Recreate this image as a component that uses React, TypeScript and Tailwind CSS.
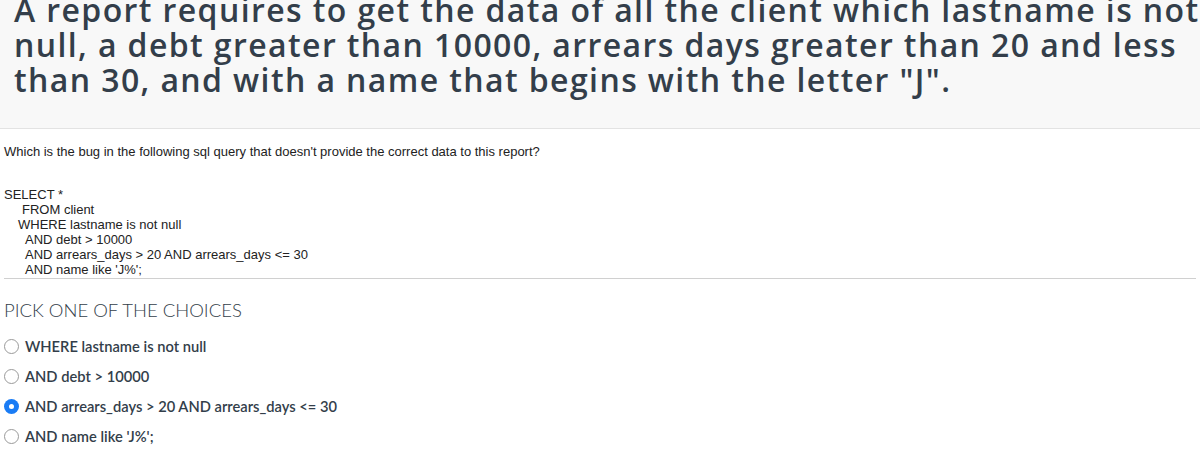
import React from "react";

const choices = [
  { label: "WHERE lastname is not null", checked: false },
  { label: "AND debt > 10000", checked: false },
  { label: "AND arrears_days > 20 AND arrears_days <= 30", checked: true },
  { label: "AND name like 'J%';", checked: false },
];

const Radio: React.FC<{ checked: boolean }> = ({ checked }) =>
  checked ? (
    <span className="flex h-[15px] w-[15px] items-center justify-center rounded-full bg-[#1a7cf5]">
      <span className="h-[5px] w-[5px] rounded-full bg-white" />
    </span>
  ) : (
    <span className="h-[15px] w-[15px] rounded-full border border-[#9a9a9a] bg-white" />
  );

const App: React.FC = () => {
  return (
    <div className="h-[455px] w-full overflow-hidden bg-white">
      {/* heading, scrolled a bit */}
      <div className="overflow-hidden border-b border-[#e3e3e3] bg-[#f8f8f8] px-[14px] pb-[31px] -mt-[8px]">
        <h1 className="whitespace-nowrap font-['Open_Sans',sans-serif] text-[32px] leading-[35px] font-semibold tracking-[1.4px] text-[#333e4a]">
          A report requires to get the data of all the client which lastname is not
          <br />
          null, a debt greater than 10000, arrears days greater than 20 and less
          <br />
          than 30, and with a name that begins with the letter "J".
        </h1>
      </div>

      <div className="px-[4px] font-['Liberation_Sans',Arial,sans-serif] text-[13px] text-[#222]">
        <p className="mt-[15px] leading-[15px]">
          Which is the bug in the following sql query that doesn't provide the correct data to this report?
        </p>
        <div className="mt-[28px] leading-[15px]">
          <div>SELECT *</div>
          <div className="pl-[18px]">FROM client</div>
          <div className="pl-[14px]">WHERE lastname is not null</div>
          <div className="pl-[21px]">AND debt &gt; 10000</div>
          <div className="pl-[21px]">AND arrears_days &gt; 20 AND arrears_days &lt;= 30</div>
          <div className="pl-[21px]">AND name like 'J%';</div>
        </div>
        <hr className="mt-[1px] border-t border-[#d0d0d0]" />
      </div>

      <div className="px-[4px] font-['Lato',sans-serif] text-[#333e4a]">
        <h2 className="mt-[20px] text-[18.5px] leading-[22px] font-light">PICK ONE OF THE CHOICES</h2>
        <ul className="mt-[16px] flex flex-col gap-[12px]">
          {choices.map((c) => (
            <li key={c.label} className="flex h-[18px] items-center gap-[6px] text-[14.7px] font-semibold">
              <Radio checked={c.checked} />
              <span>{c.label}</span>
            </li>
          ))}
        </ul>
      </div>
    </div>
  );
};

export default App;
